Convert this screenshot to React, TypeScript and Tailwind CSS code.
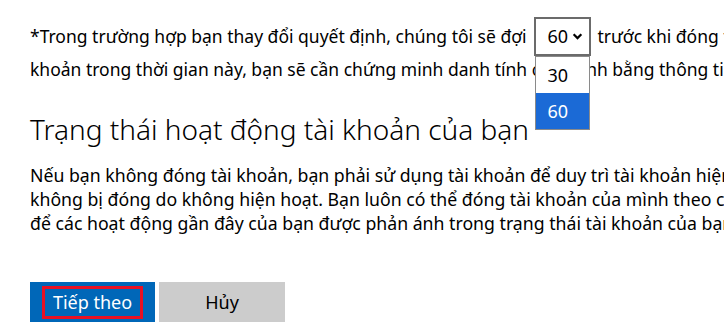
export default function App() {
  return (
    <div className="relative h-[326px] w-[724px] overflow-hidden bg-white text-black [font-family:'Noto_Sans',sans-serif]">
      <div className="pl-[30px] pt-[17px]">
        <div className="flex h-[39px] items-center whitespace-nowrap text-[17.5px]">
          <span>*Trong trường hợp bạn thay đổi quyết định, chúng tôi sẽ đợi</span>
          <div className="relative ml-[7px] shrink-0">
            <div className="flex h-[39px] w-[57px] items-center border-2 border-[#6b6b6b] pl-[12px] text-[18px]">
              <span>60</span>
              <svg viewBox="0 0 10 10" className="ml-[4px] h-[11px] w-[11px]">
                <path d="M1.5 3 L5 6.5 L8.5 3" fill="none" stroke="#000" strokeWidth="2" />
              </svg>
            </div>
            <div className="absolute left-[1px] top-full z-10 w-[55px] border border-[#8a8a8a] bg-white text-[18px]">
              <div className="flex h-[36px] items-center pl-[12px]">30</div>
              <div className="flex h-[36px] items-center bg-[#1b6ad6] pl-[12px] text-white">60</div>
            </div>
          </div>
          <span className="ml-[7px]">trước khi đóng tài khoản của bạn. Nếu bạn muốn mở lại tài</span>
        </div>
        <div className="whitespace-nowrap text-[17.5px] leading-[26px]">
          khoản trong thời gian này, bạn sẽ cần chứng minh danh tính của mình bằng thông tin bảo mật.
        </div>
        <h2 className="mt-[29px] whitespace-nowrap text-[28px] font-light leading-[36px]">
          Trạng thái hoạt động tài khoản của bạn
        </h2>
        <div className="mt-[16px] whitespace-nowrap text-[17.7px] leading-[24px]">
          <div>Nếu bạn không đóng tài khoản, bạn phải sử dụng tài khoản để duy trì tài khoản hiện hoạt</div>
          <div>không bị đóng do không hiện hoạt. Bạn luôn có thể đóng tài khoản của mình theo cách thủ công</div>
          <div>để các hoạt động gần đây của bạn được phản ánh trong trạng thái tài khoản của bạn.</div>
        </div>
        <div className="mt-[47px] flex gap-[4px]">
          <button className="flex h-[40px] w-[125px] items-center justify-center bg-[#0067b8]">
            <span className="flex h-[33px] w-[101px] items-center justify-center border-[3px] border-[#e81123] text-[18px] text-white">
              Tiếp theo
            </span>
          </button>
          <button className="flex h-[40px] w-[126px] items-center justify-center bg-[#cccccc] text-[18px] text-black">
            Hủy
          </button>
        </div>
      </div>
    </div>
  );
}
